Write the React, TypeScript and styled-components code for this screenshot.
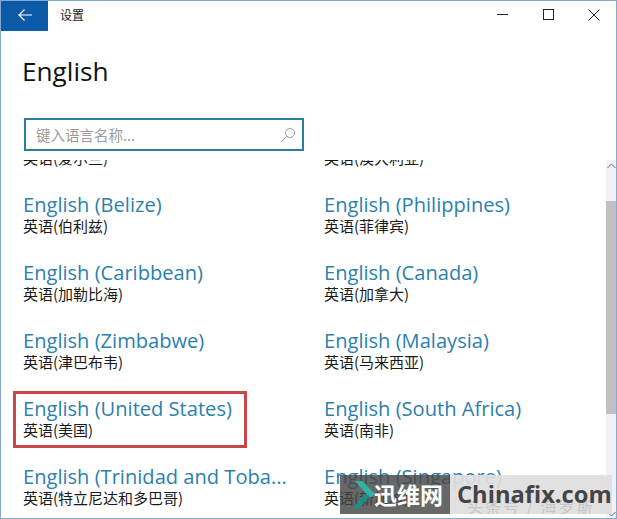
import styled, { createGlobalStyle } from 'styled-components';

const languages = [
  ['', '英语(爱尔兰)', '', '英语(澳大利亚)'],
  ['English (Belize)', '英语(伯利兹)', 'English (Philippines)', '英语(菲律宾)'],
  ['English (Caribbean)', '英语(加勒比海)', 'English (Canada)', '英语(加拿大)'],
  ['English (Zimbabwe)', '英语(津巴布韦)', 'English (Malaysia)', '英语(马来西亚)'],
  ['English (United States)', '英语(美国)', 'English (South Africa)', '英语(南非)'],
  ['English (Trinidad and Toba...', '英语(特立尼达和多巴哥)', 'English (Singapore)', '英语(新加坡)'],
];

const App = () => {
  return (
    <Window>
      <GlobalStyle />
      <TitleBar>
        <BackButton>
          <svg width="16" height="14" viewBox="0 0 16 14" fill="none" stroke="#fff" strokeWidth="1.2">
            <path d="M15 7H2M7.5 1.5 2 7l5.5 5.5" />
          </svg>
        </BackButton>
        <AppTitle>设置</AppTitle>
        <WindowControls>
          <ControlButton>
            <svg width="11" height="11" viewBox="0 0 11 11" stroke="#222" fill="none">
              <path d="M0 5.5h11" />
            </svg>
          </ControlButton>
          <ControlButton>
            <svg width="11" height="11" viewBox="0 0 11 11" stroke="#222" fill="none">
              <rect x=".5" y=".5" width="10" height="10" />
            </svg>
          </ControlButton>
          <ControlButton>
            <svg width="12" height="12" viewBox="0 0 12 12" stroke="#222" fill="none">
              <path d="M.5.5l11 11M11.5.5l-11 11" />
            </svg>
          </ControlButton>
        </WindowControls>
      </TitleBar>

      <Heading>English</Heading>

      <SearchBox>
        <SearchText>键入语言名称...</SearchText>
        <svg width="16" height="16" viewBox="0 0 16 16" fill="none" stroke="#999" strokeWidth="1">
          <circle cx="10" cy="6" r="4.5" />
          <path d="M6.8 9.2 1 15" />
        </svg>
      </SearchBox>

      <ListArea>
        <LanguageGrid>
          {languages.map((row) => (
            <LanguageRow key={row[1]}>
              <LanguageItem $marked={row[0] === 'English (United States)'}>
                <LanguageName>{row[0] || '\u00a0'}</LanguageName>
                <LanguageNative>{row[1]}</LanguageNative>
              </LanguageItem>
              <LanguageItem>
                <LanguageName>{row[2] || '\u00a0'}</LanguageName>
                <LanguageNative>{row[3]}</LanguageNative>
              </LanguageItem>
            </LanguageRow>
          ))}
        </LanguageGrid>
        <ScrollBar>
          <ScrollArrow $height={12}>
            <svg width="9" height="6" viewBox="0 0 9 6" fill="none" stroke="#666">
              <path d="M.5 5 4.5 1l4 4" />
            </svg>
          </ScrollArrow>
          <ScrollThumb />
          <ScrollArrow $height={8}>
            <svg width="9" height="6" viewBox="0 0 9 6" fill="none" stroke="#666">
              <path d="M.5 1l4 4 4-4" />
            </svg>
          </ScrollArrow>
        </ScrollBar>
      </ListArea>

      <Watermark>
        <WatermarkDark>
          <svg width="24" height="30" viewBox="0 0 24 30">
            <path d="M3 1h7l13 13-5 4z" fill="#2fb3a5" />
            <path d="M18 16 6 29H1l11-15z" fill="#1f8f86" />
          </svg>
          <WatermarkCn>迅维网</WatermarkCn>
        </WatermarkDark>
        <WatermarkLight>
          <WatermarkEn>Chinafix.com</WatermarkEn>
          <WatermarkFaint>头条号 / 海罗斯</WatermarkFaint>
        </WatermarkLight>
      </Watermark>
    </Window>
  );
};

export default App;

const GlobalStyle = createGlobalStyle`
  html, body {
    margin: 0;
    padding: 0;
    background: #fff;
  }
  *, *::after {
    box-sizing: border-box;
  }
`;

const Window = styled.div`
  position: relative;
  width: 617px;
  height: 519px;
  display: flex;
  flex-direction: column;
  overflow: hidden;
  background: #fff;
  border: 1px solid #86a9d2;
  font-family: 'Open Sans', 'Noto Sans CJK SC', sans-serif;
`;

const TitleBar = styled.div`
  height: 30px;
  flex: none;
  display: flex;
  align-items: flex-start;
`;

const BackButton = styled.div`
  width: 47px;
  height: 30px;
  padding-bottom: 3px;
  display: flex;
  align-items: center;
  justify-content: center;
  background: #0b5aa8;
`;

const AppTitle = styled.div`
  margin-left: 12px;
  font-family: 'Noto Sans CJK SC', sans-serif;
  font-size: 12px;
  line-height: 27px;
  color: #222;
`;

const WindowControls = styled.div`
  margin-left: auto;
  margin-right: -1px;
  display: flex;
`;

const ControlButton = styled.div`
  width: 46px;
  height: 27px;
  display: flex;
  align-items: center;
  justify-content: center;
`;

const Heading = styled.h1`
  margin: 18px 0 0 21px;
  height: 44px;
  font-size: 26.2px;
  line-height: 44px;
  font-weight: 400;
  color: #111;
`;

const SearchBox = styled.div`
  width: 280px;
  height: 33px;
  margin: 25px 0 0 23px;
  flex: none;
  display: flex;
  align-items: center;
  justify-content: space-between;
  padding: 0 6px 0 10px;
  border: 2px solid #2f7f9c;
  background: #fff;
`;

const SearchText = styled.span`
  font-family: 'Noto Sans CJK SC', sans-serif;
  font-size: 14.5px;
  color: #9b9b9b;
`;

const ListArea = styled.div`
  flex: 1;
  min-height: 0;
  margin-top: 9px;
  display: flex;
  overflow: hidden;
`;

const LanguageGrid = styled.div`
  flex: 1;
  margin-top: -38px;
  padding-left: 22px;
`;

const LanguageRow = styled.div`
  height: 68px;
  display: grid;
  grid-template-columns: 301px 1fr;
`;

const LanguageItem = styled.div<{ $marked?: boolean }>`
  position: relative;
  height: 68px;

  ${(p) =>
    p.$marked &&
    `
    &::after {
      content: '';
      position: absolute;
      left: -10px;
      top: -3px;
      width: 234px;
      height: 57px;
      border: 3px solid #c8474b;
    }
  `}
`;

const LanguageName = styled.div`
  height: 29px;
  font-size: 20.1px;
  line-height: 29px;
  color: #2c7fae;
  white-space: nowrap;
`;

const LanguageNative = styled.div`
  height: 20px;
  margin-top: -3px;
  font-family: 'Noto Sans CJK SC', sans-serif;
  font-size: 15px;
  line-height: 20px;
  color: #1a1a1a;
`;

const ScrollBar = styled.div`
  width: 10px;
  flex: none;
  display: flex;
  flex-direction: column;
  background: #f2f1f4;
`;

const ScrollArrow = styled.div<{ $height: number }>`
  height: ${(p) => p.$height}px;
  flex: none;
  display: flex;
  align-items: center;
  justify-content: center;
`;

const ScrollThumb = styled.div`
  height: 213px;
  margin-top: 29px;
  margin-bottom: auto;
  background: #c3bfc0;
`;

const Watermark = styled.div`
  position: absolute;
  left: 339px;
  top: 474px;
  width: 272px;
  height: 39px;
  display: flex;
`;

const WatermarkDark = styled.div`
  width: 110px;
  display: flex;
  align-items: center;
  padding-left: 12px;
  background: rgba(70, 70, 70, 0.82);
`;

const WatermarkCn = styled.span`
  margin-left: -2px;
  font-family: 'Noto Sans CJK SC', sans-serif;
  font-size: 23px;
  font-weight: 700;
  line-height: 1;
  color: #fff;
`;

const WatermarkLight = styled.div`
  position: relative;
  flex: 1;
  display: flex;
  align-items: center;
  padding-left: 7px;
  overflow: hidden;
  background: rgba(222, 222, 222, 0.92);
`;

const WatermarkEn = styled.span`
  position: relative;
  z-index: 1;
  font-size: 23.7px;
  font-weight: 700;
  line-height: 1;
  color: #444;
`;

const WatermarkFaint = styled.span`
  position: absolute;
  left: 17px;
  bottom: 0;
  font-family: 'Noto Sans CJK SC', sans-serif;
  font-size: 16px;
  line-height: 1;
  letter-spacing: 2px;
  color: #c6c6c6;
`;
